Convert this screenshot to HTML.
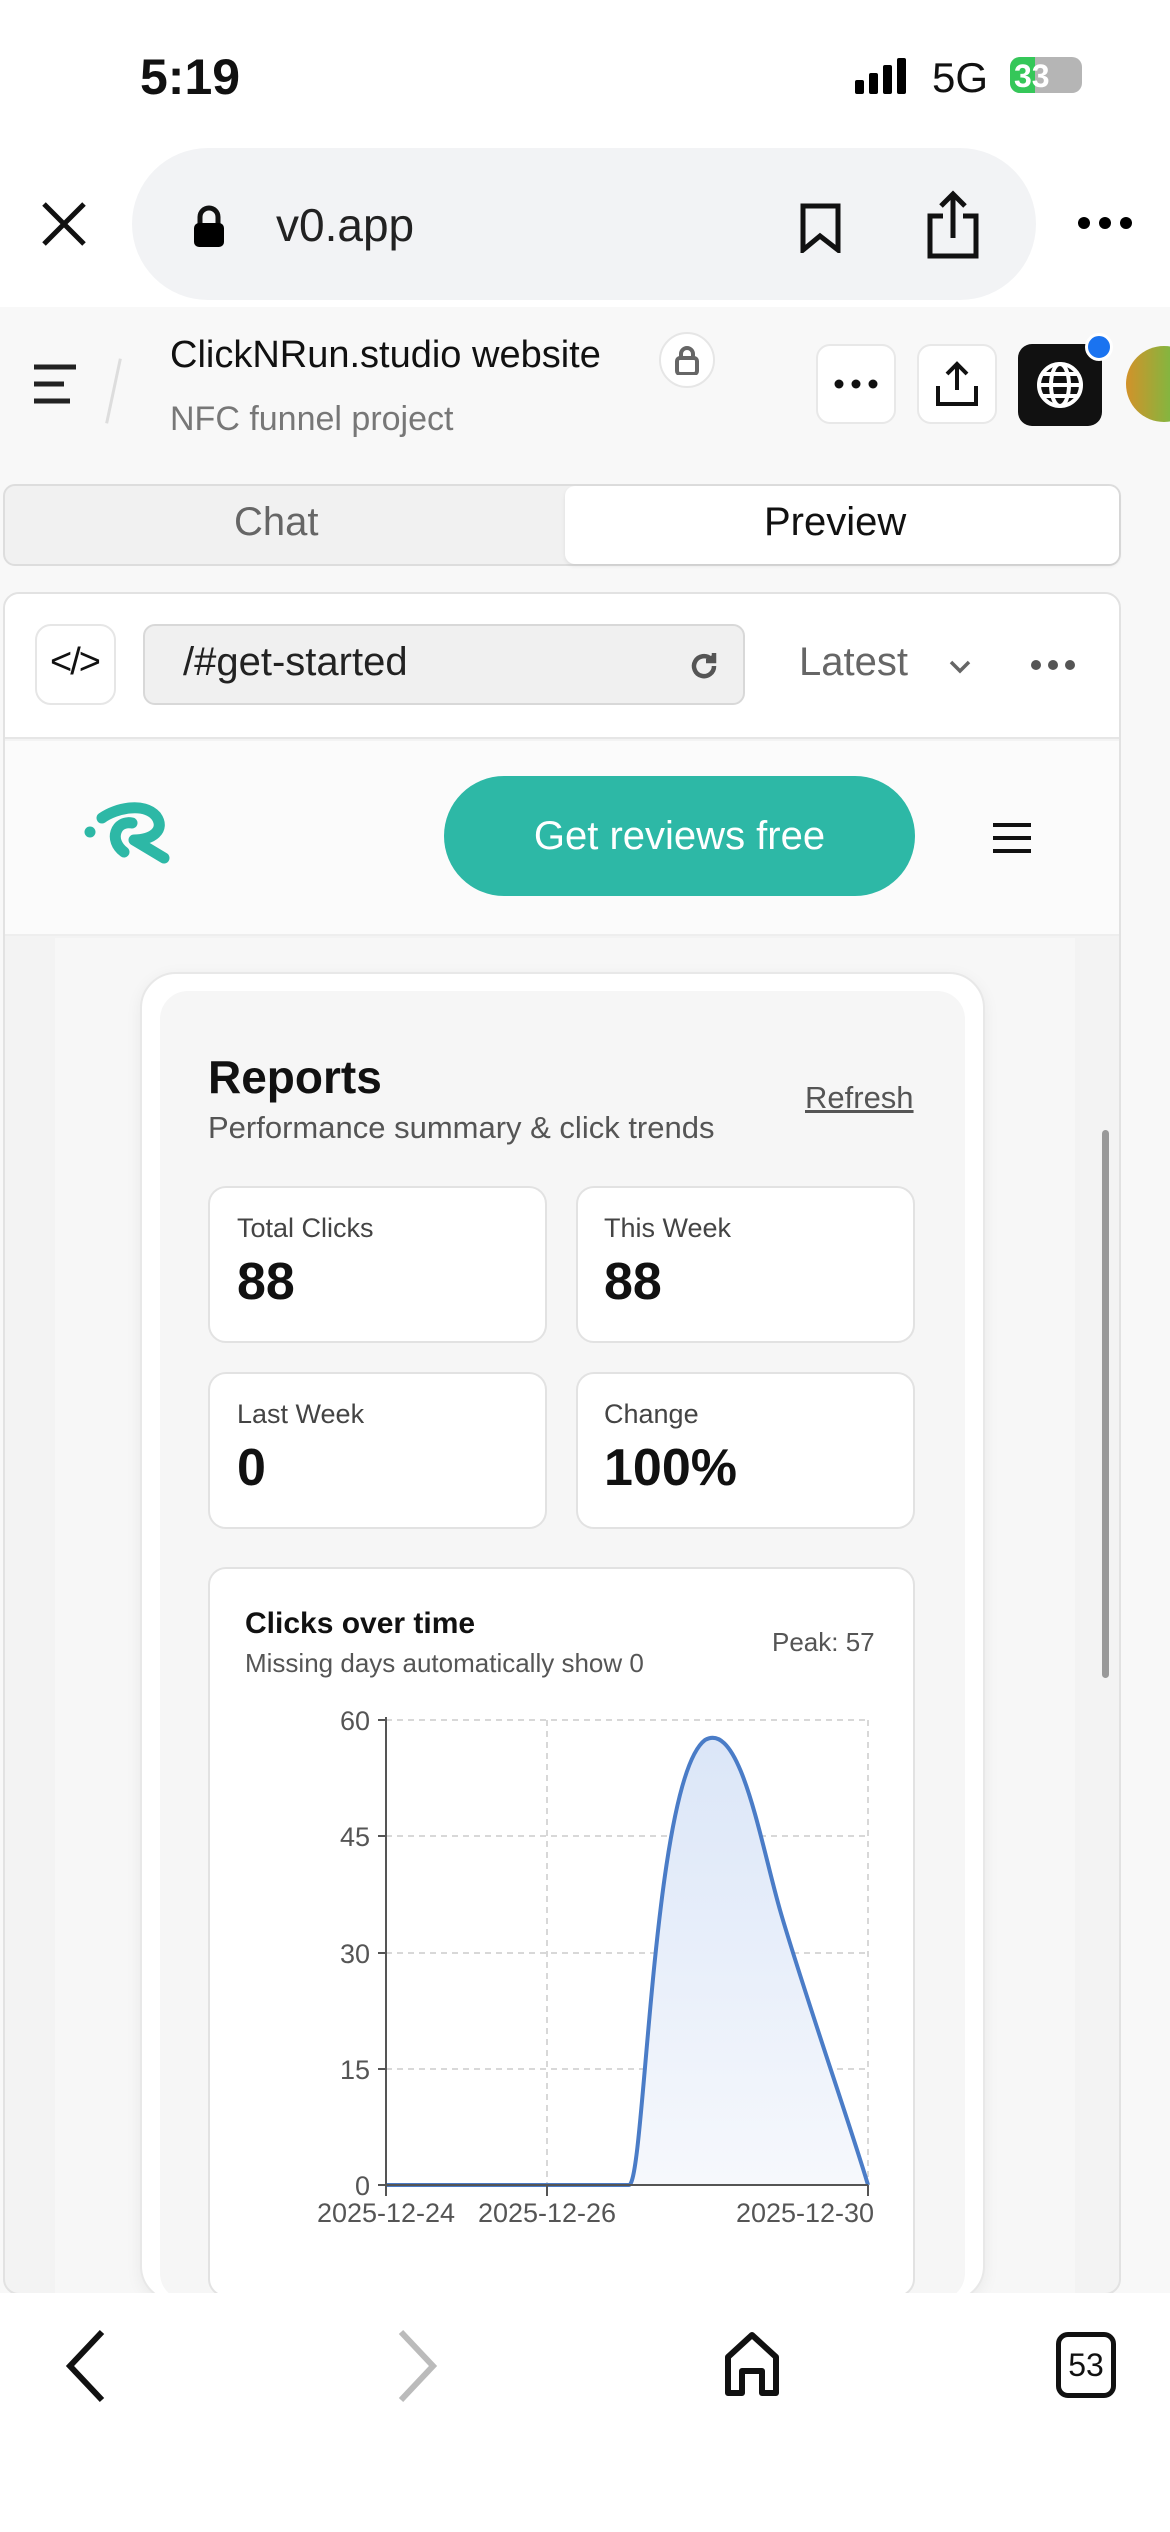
<!DOCTYPE html>
<html><head><meta charset="utf-8"><style>
*{margin:0;padding:0;box-sizing:border-box}
body{width:1170px;height:2532px;position:relative;background:#fff;font-family:"Liberation Sans",sans-serif;overflow:hidden;color:#111}
.a{position:absolute}
</style></head><body>
<div class="a" style="left:140px;top:48px;font-size:50px;font-weight:700">5:19</div>
<svg class="a" style="left:855px;top:58px" width="60" height="36"><rect x="0" y="22" width="9" height="14" rx="2"/><rect x="14" y="15" width="9" height="21" rx="2"/><rect x="28" y="7" width="9" height="29" rx="2"/><rect x="42" y="0" width="9" height="36" rx="2"/></svg>
<div class="a" style="left:932px;top:54px;font-size:42px">5G</div>
<div class="a" style="left:1010px;top:57px;width:72px;height:36px;border-radius:10px;background:#b5b5b5;overflow:hidden"><div style="width:25px;height:36px;background:#35c759"></div><div class="a" style="left:4px;top:1px;color:#fff;font-size:32px;font-weight:700">33</div></div>

<div class="a" style="left:132px;top:148px;width:904px;height:152px;border-radius:76px;background:#f2f3f5"></div>
<svg class="a" style="left:40px;top:200px" width="48" height="48" stroke="#111" stroke-width="5"><path d="M4 4L44 44M44 4L4 44"/></svg>
<svg class="a" style="left:193px;top:204px" width="32" height="44"><path d="M7 20V13a9 9 0 0118 0v7" fill="none" stroke="#111" stroke-width="5"/><rect x="1" y="19" width="30" height="24" rx="5"/></svg>
<div class="a" style="left:276px;top:198px;font-size:46px;color:#222">v0.app</div>
<svg class="a" style="left:798px;top:203px" width="46" height="50"><path d="M5 3h35v44L22 33 5 47z" fill="none" stroke="#111" stroke-width="5"/></svg>
<svg class="a" style="left:925px;top:190px" width="56" height="70" fill="none" stroke="#111" stroke-width="5"><path d="M28 48V4M16 16L28 4 40 16M18 26H5v40h46V26H38"/></svg>
<svg class="a" style="left:1078px;top:216px" width="54" height="14"><circle cx="6" cy="7" r="6"/><circle cx="27" cy="7" r="6"/><circle cx="48" cy="7" r="6"/></svg>

<div class="a" style="left:0;top:307px;width:1170px;height:1986px;background:#f8f8f8"></div>
<svg class="a" style="left:34px;top:364px" width="46" height="40" stroke="#222" stroke-width="5"><path d="M0 3H42M0 20H30M0 37H36"/></svg>
<div class="a" style="left:112px;top:358px;width:3px;height:66px;background:#ddd;transform:rotate(12deg)"></div>
<div class="a" style="left:170px;top:334px;font-size:38px;font-weight:500;color:#111">ClickNRun.studio website</div>
<div class="a" style="left:659px;top:332px;width:56px;height:56px;border-radius:50%;border:2px solid #e6e6e6;background:#fff"></div>
<svg class="a" style="left:675px;top:345px" width="24" height="30"><path d="M6 13V9a6 6 0 0112 0v4" fill="none" stroke="#666" stroke-width="4"/><rect x="2" y="13" width="20" height="16" rx="3" fill="none" stroke="#666" stroke-width="4"/></svg>
<div class="a" style="left:170px;top:400px;font-size:34px;color:#777">NFC funnel project</div>
<div class="a" style="left:816px;top:344px;width:80px;height:80px;border:2px solid #e8e8e8;border-radius:14px;background:#fff"></div>
<svg class="a" style="left:834px;top:379px" width="44" height="10"><circle cx="5" cy="5" r="4.5" fill="#111"/><circle cx="22" cy="5" r="4.5" fill="#111"/><circle cx="39" cy="5" r="4.5" fill="#111"/></svg>
<div class="a" style="left:917px;top:344px;width:80px;height:80px;border:2px solid #e8e8e8;border-radius:14px;background:#fff"></div>
<svg class="a" style="left:936px;top:360px" width="42" height="48" fill="none" stroke="#111" stroke-width="4"><path d="M21 30V4M11 14L21 4 31 14M2 26v18h38V26"/></svg>
<div class="a" style="left:1018px;top:344px;width:84px;height:82px;border-radius:14px;background:#111"></div>
<svg class="a" style="left:1036px;top:361px" width="48" height="48" fill="none" stroke="#fff" stroke-width="4"><circle cx="24" cy="24" r="21"/><ellipse cx="24" cy="24" rx="9" ry="21"/><path d="M3 24h42M7 13h34M7 35h34"/></svg>
<div class="a" style="left:1085px;top:333px;width:28px;height:28px;border-radius:50%;background:#1a73f0;border:3px solid #fff"></div>
<div class="a" style="left:1126px;top:346px;width:76px;height:76px;border-radius:50%;background:linear-gradient(90deg,#d2922a,#4ccf4f)"></div>

<div class="a" style="left:3px;top:484px;width:1118px;height:82px;border:2px solid #ddd;border-radius:12px;background:#f1f1f1"></div>
<div class="a" style="left:565px;top:486px;width:554px;height:78px;border-radius:10px;background:#fff;box-shadow:0 2px 4px rgba(0,0,0,.08)"></div>
<div class="a" style="left:234px;top:500px;font-size:40px;color:#666">Chat</div>
<div class="a" style="left:764px;top:500px;font-size:40px;color:#111">Preview</div>

<div class="a" style="left:3px;top:592px;width:1118px;height:1703px;border:2px solid #e2e2e2;border-radius:16px;background:#f3f3f3;overflow:hidden">
 <div class="a" style="left:0;top:0;width:1118px;height:145px;background:#fff;border-bottom:2px solid #e6e6e6"></div>
 <div class="a" style="left:0;top:147px;width:1118px;height:195px;background:#fbfbfb;border-bottom:2px solid #eee"></div>
 <div class="a" style="left:50px;top:344px;width:1020px;height:1400px;background:#f7f7f7"></div>
</div>
<div class="a" style="left:35px;top:624px;width:81px;height:81px;border:2px solid #e6e6e6;border-radius:16px;background:#fff"></div>
<div class="a" style="left:50px;top:641px;font-size:38px;color:#111;letter-spacing:-2px">&lt;/&gt;</div>
<div class="a" style="left:143px;top:624px;width:602px;height:81px;border:2px solid #d8d8d8;border-radius:12px;background:#f0f0f0"></div>
<div class="a" style="left:183px;top:640px;font-size:40px;color:#222">/#get-started</div>
<svg class="a" style="left:688px;top:650px" width="32" height="32" fill="none" stroke="#555" stroke-width="4.5"><path d="M26 16a10 10 0 11-3-7"/><path d="M26 3v8h-8" fill="#555"/></svg>
<div class="a" style="left:799px;top:640px;font-size:40px;color:#666">Latest</div>
<svg class="a" style="left:948px;top:659px" width="24" height="16" fill="none" stroke="#666" stroke-width="3.5"><path d="M3 3l9 9 9-9"/></svg>
<svg class="a" style="left:1031px;top:659px" width="44" height="12"><circle cx="5" cy="6" r="5" fill="#555"/><circle cx="22" cy="6" r="5" fill="#555"/><circle cx="39" cy="6" r="5" fill="#555"/></svg>

<svg class="a" style="left:70px;top:790px" width="120" height="90" fill="none" stroke="#2db8a6" stroke-width="11" stroke-linecap="round" stroke-linejoin="round"><circle cx="20" cy="42" r="5.5" fill="#2db8a6" stroke="none"/><path d="M32 28C46 18 74 12 86 26C96 40 82 50 64 50L94 68"/><path d="M62 33C46 30 38 50 54 62"/></svg>
<div class="a" style="left:444px;top:776px;width:471px;height:120px;border-radius:60px;background:#2db8a6;color:#fff;font-size:40px;text-align:center;line-height:120px">Get reviews free</div>
<svg class="a" style="left:993px;top:822px" width="38" height="32" stroke="#111" stroke-width="4"><path d="M0 3h38M0 16h38M0 29h38"/></svg>
<div class="a" style="left:1102px;top:1130px;width:7px;height:548px;border-radius:4px;background:#999"></div>

<div class="a" style="left:140px;top:972px;width:845px;height:1330px;border:2px solid #e8e8e8;border-radius:36px;background:#fff;box-shadow:0 4px 16px rgba(0,0,0,.06)"></div>
<div class="a" style="left:160px;top:991px;width:805px;height:1310px;border-radius:28px;background:#f6f6f6"></div>
<div class="a" style="left:208px;top:1050px;font-size:46px;font-weight:700">Reports</div>
<div class="a" style="left:208px;top:1110px;font-size:31px;color:#555">Performance summary &amp; click trends</div>
<div class="a" style="left:805px;top:1080px;font-size:31px;color:#555;text-decoration:underline">Refresh</div>

<div class="a" style="left:208px;top:1186px;width:339px;height:157px;border:2px solid #e2e2e2;border-radius:18px;background:#fff"></div>
<div class="a" style="left:576px;top:1186px;width:339px;height:157px;border:2px solid #e2e2e2;border-radius:18px;background:#fff"></div>
<div class="a" style="left:208px;top:1372px;width:339px;height:157px;border:2px solid #e2e2e2;border-radius:18px;background:#fff"></div>
<div class="a" style="left:576px;top:1372px;width:339px;height:157px;border:2px solid #e2e2e2;border-radius:18px;background:#fff"></div>
<div class="a" style="left:237px;top:1213px;font-size:27px;color:#444">Total Clicks</div>
<div class="a" style="left:237px;top:1252px;font-size:52px;font-weight:700">88</div>
<div class="a" style="left:604px;top:1213px;font-size:27px;color:#444">This Week</div>
<div class="a" style="left:604px;top:1252px;font-size:52px;font-weight:700">88</div>
<div class="a" style="left:237px;top:1399px;font-size:27px;color:#444">Last Week</div>
<div class="a" style="left:237px;top:1438px;font-size:52px;font-weight:700">0</div>
<div class="a" style="left:604px;top:1399px;font-size:27px;color:#444">Change</div>
<div class="a" style="left:604px;top:1438px;font-size:52px;font-weight:700">100%</div>

<div class="a" style="left:208px;top:1567px;width:707px;height:730px;border:2px solid #e2e2e2;border-radius:18px;background:#fff"></div>
<div class="a" style="left:245px;top:1607px;font-size:30px;font-weight:700">Clicks over time</div>
<div class="a" style="left:245px;top:1648px;font-size:26px;color:#555">Missing days automatically show 0</div>
<div class="a" style="left:772px;top:1627px;font-size:26px;color:#555">Peak: 57</div>
<svg class="a" style="left:300px;top:1700px" width="600" height="540" font-family="Liberation Sans" font-size="27" fill="#555">
<defs><linearGradient id="g" x1="0" y1="0" x2="0" y2="1"><stop offset="0" stop-color="#dbe6f8"/><stop offset="1" stop-color="#f6f8fc"/></linearGradient></defs>
<g stroke="#ccc" stroke-width="1.5" stroke-dasharray="6 5"><path d="M86 20H568M86 136H568M86 253H568M86 369H568M247 20V485M568 20V485"/></g>
<path d="M86 485H329C345 485 352 80 405 40C440 20 460 140 480 210S555 440 568 485Z" fill="url(#g)"/>
<path d="M86 485H329C345 485 352 80 405 40C440 20 460 140 480 210S555 440 568 485" fill="none" stroke="#4a7cc7" stroke-width="4"/>
<path d="M86 17V485H568M78 20H86M78 136H86M78 253H86M78 369H86M78 485H86M86 485V496M247 485V496M568 485V496" stroke="#555" stroke-width="2" fill="none"/>
<text x="70" y="30" text-anchor="end">60</text><text x="70" y="146" text-anchor="end">45</text><text x="70" y="263" text-anchor="end">30</text><text x="70" y="379" text-anchor="end">15</text><text x="70" y="495" text-anchor="end">0</text>
<text x="86" y="522" text-anchor="middle">2025-12-24</text><text x="247" y="522" text-anchor="middle">2025-12-26</text><text x="505" y="522" text-anchor="middle">2025-12-30</text>
</svg>

<div class="a" style="left:0;top:2293px;width:1170px;height:239px;background:#fff"></div>
<svg class="a" style="left:62px;top:2328px" width="46" height="76" fill="none" stroke="#111" stroke-width="6"><path d="M40 4L8 38l32 34"/></svg>
<svg class="a" style="left:395px;top:2328px" width="46" height="76" fill="none" stroke="#bbb" stroke-width="6"><path d="M6 4l32 34L6 72"/></svg>
<svg class="a" style="left:724px;top:2331px" width="56" height="66" fill="none" stroke="#111" stroke-width="6" stroke-linejoin="round"><path d="M4 62V26L28 4l24 22v36H38V40H18v22z"/></svg>
<div class="a" style="left:1056px;top:2332px;width:60px;height:66px;border:5px solid #111;border-radius:12px;font-size:32px;text-align:center;line-height:56px">53</div>
</body></html>
